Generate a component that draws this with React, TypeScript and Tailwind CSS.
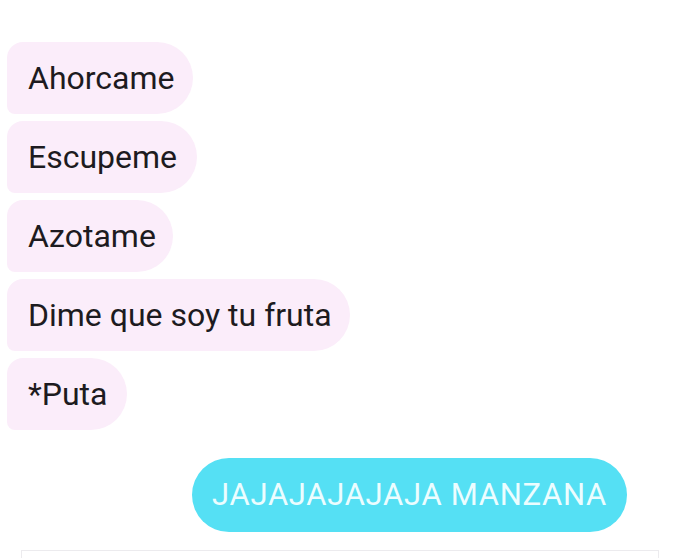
import React from "react";

const MESSAGES = [
  { text: "Ahorcame", width: "w-[186px]" },
  { text: "Escupeme", width: "w-[190px]" },
  { text: "Azotame", width: "w-[166px]" },
  { text: "Dime que soy tu fruta", width: "w-[343px]" },
  { text: "*Puta", width: "w-[120px]" },
];

export default function App() {
  return (
    <div className="w-[680px] h-[558px] overflow-hidden bg-white font-['Roboto',sans-serif]">
      {/* Received messages */}
      <div className="flex flex-col gap-[7px] pt-[42px] pl-[7px]">
        {MESSAGES.map((m, i) => (
          <div
            key={i}
            className={`h-[72px] ${m.width} flex items-center pl-[21px] bg-[#fbedfa] rounded-tl-[16px] rounded-bl-[8px] rounded-r-[36px] text-[32px] text-[#1d1b20]`}
          >
            {m.text}
          </div>
        ))}
      </div>

      {/* Sent message */}
      <div className="flex justify-end pr-[53px] mt-[28px]">
        <div className="h-[74px] w-[435px] flex items-center justify-center rounded-full bg-[#55e0f4] text-[31px] tracking-[0.7px] text-[#ecfdff]">
          JAJAJAJAJAJA MANZANA
        </div>
      </div>

      {/* Input box */}
      <div className="mx-[21px] mt-[18px] h-[40px] border border-[#ecebee] bg-white" />
    </div>
  );
}
